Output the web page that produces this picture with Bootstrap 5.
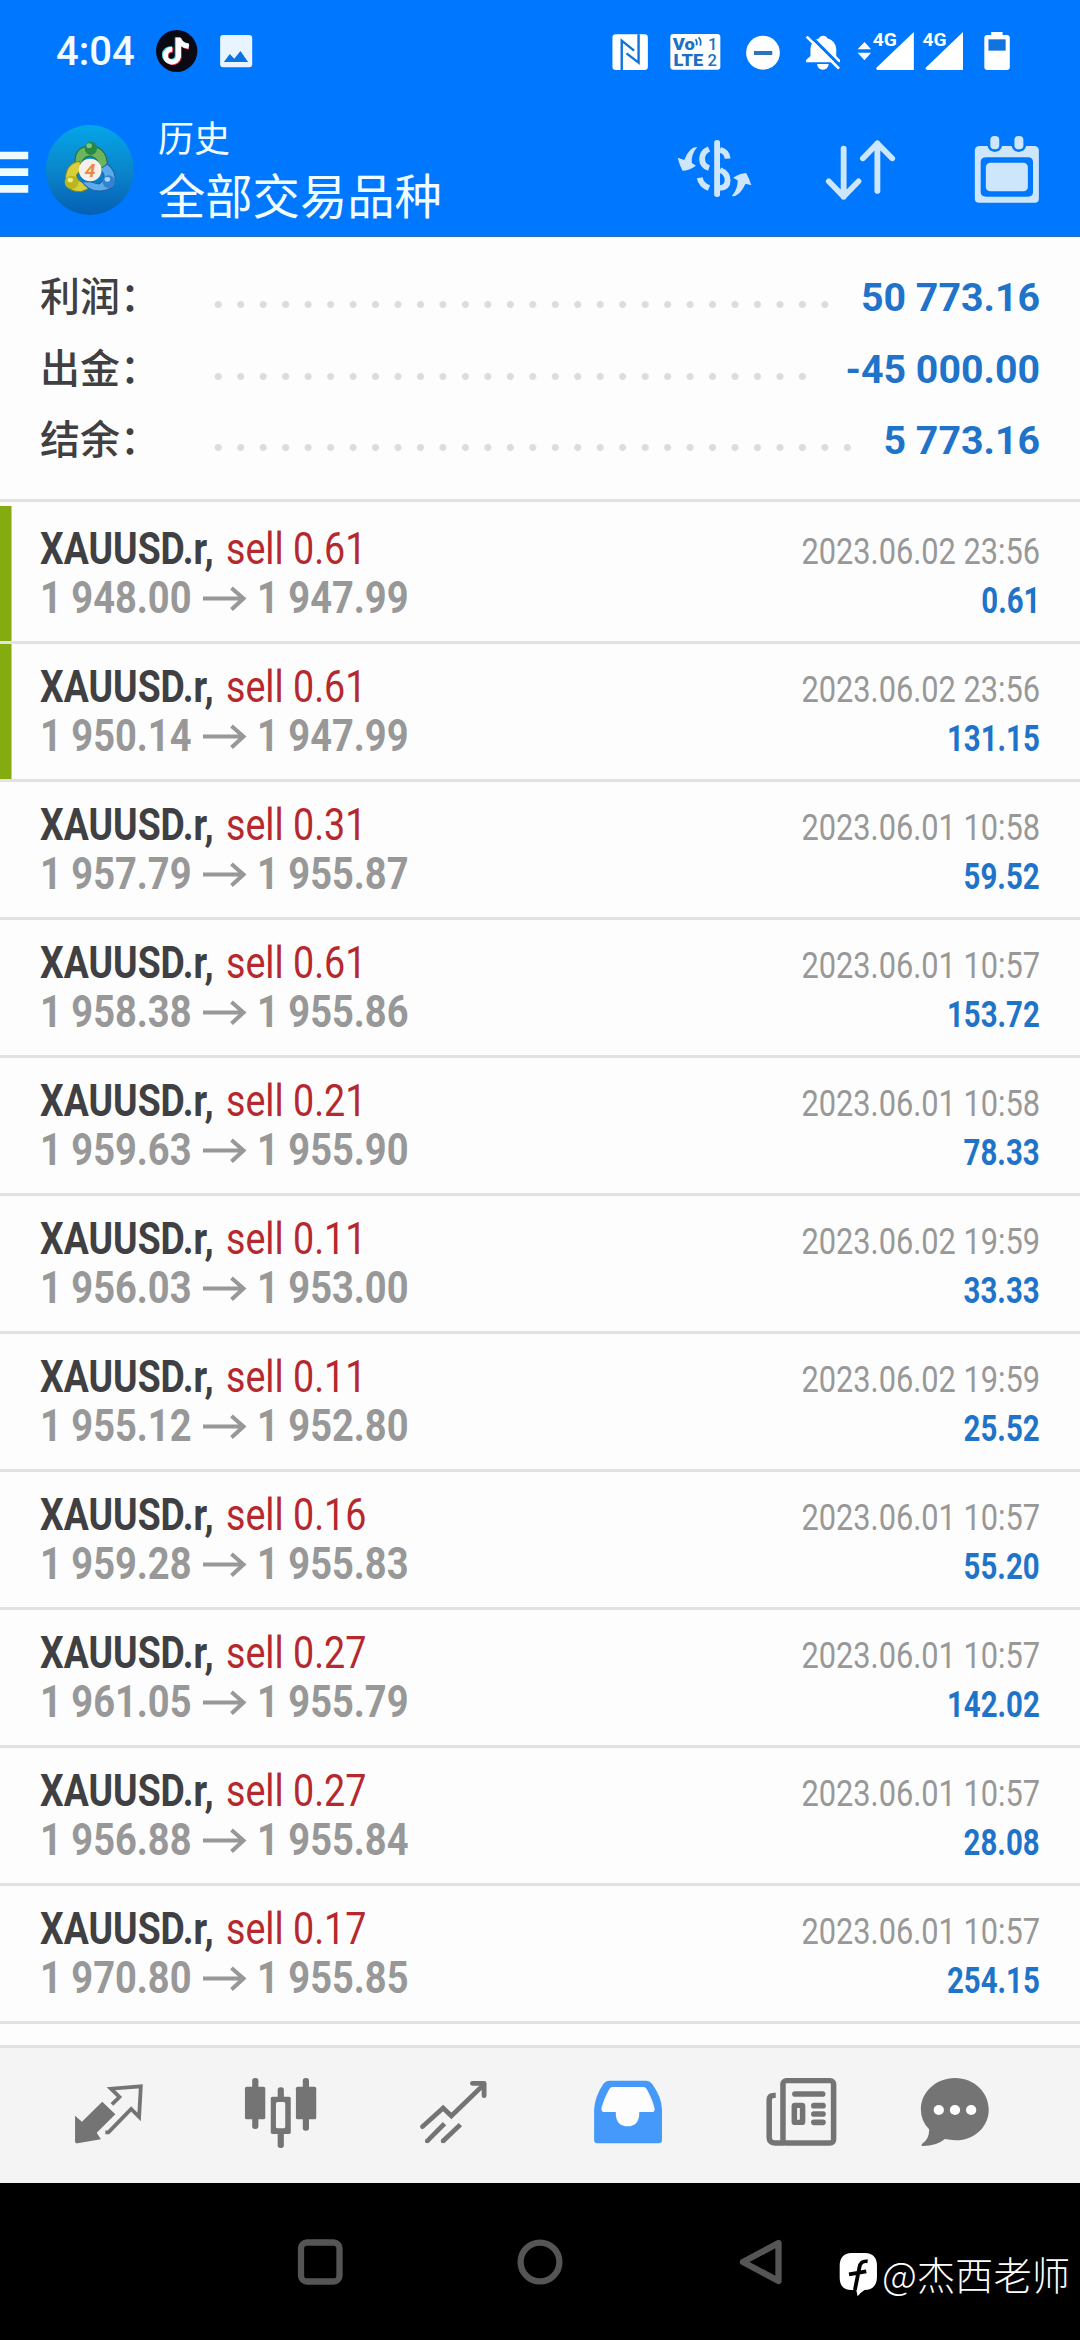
<!DOCTYPE html>
<html lang="zh-CN">
<head>
<meta charset="utf-8">
<meta name="viewport" content="width=device-width, initial-scale=1">
<title>历史</title>
<link rel="stylesheet" href="https://cdn.jsdelivr.net/npm/bootstrap@5.3.0/dist/css/bootstrap.min.css">
<style>
  body{width:1080px;height:2340px;overflow:hidden;background:#fdfdfd;font-family:Roboto,"Noto Sans CJK SC",sans-serif;color:#404042}
  svg{display:block;flex:none}
  .app-top{background:#0077ff;height:237px;border-bottom:1px solid #2a6fb5;color:#f2fdff}
  .status{height:102px;padding:30px 58px 0 56px}
  .clock{font-size:40px;font-weight:500;line-height:43px;width:100px}
  .titlebar{height:134px}
  .titles{padding-top:14px}
  .sub-t{font-size:36px;line-height:40px}
  .main-t{font-size:47.3px;line-height:76px}
  .cjk{font-family:"Noto Sans CJK SC",sans-serif}
  .summary{height:265px;padding:26px 40px 0;border-bottom:3px solid #e2e2e2}
  .sum-row{height:71.4px}
  .sum-label{width:167px;font-size:40px;font-weight:500;line-height:50px;padding-bottom:9px}
  .dots{height:71px;width:calc(var(--n)*22.48px);background:radial-gradient(circle at 50% 50%,#dcdcdc 3px,transparent 4px) 0 6px/22.48px 71px repeat-x}
  .sum-val{font-size:39.3px;font-weight:700;color:#1f73c8;line-height:71px}
  .deals{height:1543px;padding-top:4px}
  .deal{height:138px;padding:19px 40px 0;border-bottom:3px solid #e2e2e2;line-height:49px;white-space:nowrap}
  .deal.fresh{box-shadow:inset 11.5px 0 0 #84ab10}
  .nar{display:inline-block;transform-origin:0 50%}
  .sym{width:186px;font-size:44px;font-weight:700}
  .sym .nar{transform:scaleX(.848)}
  .side{font-size:44px;color:#b5282d}
  .side .nar{transform:scaleX(.855)}
  .price{font-size:44px;font-weight:700;color:#989898}
  .price .nar{transform:scaleX(.865)}
  .p-open{width:163px}
  .arr{width:54px;height:49px}
  .meta{padding-top:2px;text-align:right}
  .meta .nar{transform-origin:100% 50%}
  .when{font-size:37.5px;color:#989898}
  .when .nar{transform:scaleX(.82)}
  .gain{font-size:37px;font-weight:700;color:#1f73c8}
  .gain .nar{transform:scaleX(.795)}
  .tabs{height:138px;background:#f4f4f5;border-top:3px solid #e2e2e2;padding-left:22px;color:#747475}
  .sysnav{height:157px;background:#000;position:relative}
  .wm{position:absolute;right:10px;bottom:36px;color:#fff}
  .wm span{font-size:38.3px;line-height:56px;font-weight:300;padding-bottom:2px}
</style>
<script src="https://cdn.jsdelivr.net/npm/bootstrap@5.3.0/dist/js/bootstrap.bundle.min.js"></script>
</head>
<body>
<svg width="0" height="0" class="position-absolute"><defs>
  <symbol id="arrow" viewBox="0 0 54 49"><path d="M0 24.6H40M28.500 14L40.500 24.600 28.500 35.500" fill="none" stroke="#989898" stroke-width="4"/></symbol>
</defs></svg>

<header class="app-top">
  <div class="status d-flex align-items-start">
    <div class="clock">4:04</div>
    <svg width="100" height="43" viewBox="453 90 290 129" preserveAspectRatio="none">
      <ellipse cx="513" cy="153" rx="60" ry="63" fill="#0b0a14"/>
      <g fill="none" stroke-width="15"><path d="M520 116V172A19 19 0 1 1 503 150M520 118Q526 138 549 141" stroke="#e0365a"/><path d="M515 112V168A19 19 0 1 1 498 146M515 114Q521 134 546 137" stroke="#3bd6d8"/><path d="M518 113V170A19 19 0 1 1 500 148M518 115Q524 136 548 139" stroke="#fff"/></g>
      <rect x="639" y="105" width="93" height="97" rx="9" fill="#e8f4ff"/><path d="M650 186L667 162 680 176 698 153 720 186Z" fill="#0b74e0"/>
    </svg>
    <div class="ms-auto d-flex">
      <svg width="51.6" height="43.300" viewBox="200 90 150 130" preserveAspectRatio="none"><rect x="210" y="103" width="103" height="107" rx="10" fill="#fff"/><path d="M237 210V122L273 152M286 103V188L251 160" fill="none" stroke="#1273dc" stroke-width="7"/></svg>
      <svg width="72.4" height="43.300" viewBox="350 90 210 130" preserveAspectRatio="none"><rect x="380" y="102" width="145" height="107" rx="9" fill="#fff"/><g fill="#1c6fc4" font-family="Roboto" font-weight="900" font-size="50"><text x="387" y="149" textLength="64" lengthAdjust="spacingAndGlyphs">Vo</text><text x="389" y="198" textLength="86" lengthAdjust="spacingAndGlyphs">LTE</text><text x="489" y="150" font-weight="500" font-size="48">1</text><text x="488" y="198" font-weight="500" font-size="48">2</text></g><path d="M453 118Q459 125 456 136M462 112Q471 122 467 137" fill="none" stroke="#1c6fc4" stroke-width="5"/></svg>
      <svg width="62" height="43.300" viewBox="560 90 180 130" preserveAspectRatio="none"><ellipse cx="647" cy="158" rx="49" ry="51" fill="#fff"/><path d="M621 159H674" stroke="#2b74bd" stroke-width="12"/></svg>
      <svg width="55" height="43.300" viewBox="740 90 160 130" preserveAspectRatio="none"><g fill="#fff"><path d="M772 187V180L785 168V145Q788 122 810 115Q812 107 822 107T834 115Q857 122 860 146V168L871 180V187Z"/><path d="M804 192H838Q836 209 821 209T804 192Z"/></g><path d="M781 104L872 198" stroke="#0077ff" stroke-width="9"/><path d="M774 110L868 206" stroke="#fff" stroke-width="8"/></svg>
      <svg width="69" height="43.300" viewBox="900 90 200 130" preserveAspectRatio="none"><g fill="#fff"><path d="M942 126L961 148H922ZM922 158H961L942 181ZM1085 96V210H980Q973 208 978 202Z"/><text x="966" y="139" font-family="Roboto" font-weight="700" font-size="57" textLength="70" lengthAdjust="spacingAndGlyphs">4G</text></g></svg>
      <svg width="55" height="43.300" viewBox="1100 90 160 130" preserveAspectRatio="none"><g fill="#fff"><path d="M1228 96V210H1124Q1116 208 1121 202Z"/><text x="1110" y="139" font-family="Roboto" font-weight="700" font-size="57" textLength="70" lengthAdjust="spacingAndGlyphs">4G</text></g></svg>
      <svg width="48.2" height="43.300" viewBox="1260 90 140 130" preserveAspectRatio="none"><path d="M1310 96H1343V105H1355Q1364 105 1364 114V201Q1364 210 1355 210H1299Q1290 210 1290 201V114Q1290 105 1299 105H1310Z" fill="#fff"/><path d="M1302 118H1352V152H1302Z" fill="#1273dc"/></svg>
    </div>
  </div>
  <div class="titlebar d-flex align-items-start">
    <svg width="158" height="134" viewBox="0 306 459 402" preserveAspectRatio="none">
      <defs><linearGradient id="sea" x1="0" y1="0" x2="0" y2="1"><stop offset="0" stop-color="#05a5e8"/><stop offset=".5" stop-color="#0a86cc"/><stop offset="1" stop-color="#065fb4"/></linearGradient></defs>
      <path d="M0 455H82V478H0ZM0 505H82V528H0ZM0 555H82V578H0Z" fill="#eefcff"/>
      <ellipse cx="261" cy="510" rx="128" ry="135" fill="url(#sea)"/>
      <g stroke-width="3"><path d="M218 488Q216 440 262 438Q312 440 312 500L292 510Q286 472 262 468Q240 470 238 492Z" fill="#6db55c" stroke="#226c3a"/>
      <path d="M232 484Q188 490 190 545Q196 576 236 575L256 566 248 548Q222 545 222 525L236 508Z" fill="#d9cf3b" stroke="#7f8524"/>
      <path d="M292 506L312 492Q338 512 334 546Q326 574 288 573Q256 572 238 545L262 545 286 552Q305 544 302 524Z" fill="#5cabea" stroke="#1c62a8"/></g>
      <ellipse cx="264" cy="445" rx="18" ry="20" fill="#278845"/><ellipse cx="259" cy="437" rx="8" ry="7" fill="#7fc486"/>
      <ellipse cx="208" cy="547" rx="20" ry="20" fill="#b8b51d"/><ellipse cx="204" cy="540" rx="8" ry="7" fill="#f1ed86"/>
      <ellipse cx="316" cy="545" rx="18" ry="19" fill="#3382d2"/><ellipse cx="312" cy="538" rx="8" ry="7" fill="#a6d7fb"/>
      <ellipse cx="262" cy="510" rx="33" ry="34" fill="#f6f1e8"/><text x="262" y="530" text-anchor="middle" font-family="Roboto" font-weight="700" font-style="italic" font-size="56" fill="#ea8a42">4</text>
    </svg>
    <div class="cjk titles"><div class="sub-t">历史</div><div class="main-t">全部交易品种</div></div>
    <svg class="ms-auto" width="413.2" height="134" viewBox="368 306 1200 402" preserveAspectRatio="none">
      <g fill="#cde6fc"><rect x="505" y="420" width="17" height="171" rx="8"/>
      <path d="M456 441Q433 440 418 480L399 473Q404 494 413 512Q432 512 452 497L440 489Q438 462 456 441ZM556 589Q579 590 596 551L613 556Q608 538 598 519Q580 520 560 533L573 541Q575 565 556 589Z"/></g>
      <g fill="none" stroke="#cde6fc" stroke-width="17"><path d="M490 447Q470 456 470 477T490 504M463 533Q467 555 490 564M522 449Q543 455 544 476M522 510Q544 519 544 541T522 564"/></g>
      <g fill="none" stroke="#cde6fc" stroke-width="17" stroke-linecap="round" stroke-linejoin="round"><path d="M881 446V590M838 544L881 590 924 544M979 573V430M937 475L979 430 1022 475"/></g>
      <path fill-rule="evenodd" fill="#cde6fc" d="M1274 438H1299Q1302 454 1320 456Q1338 454 1341 438H1369Q1372 454 1390 456Q1408 454 1411 438H1436Q1448 440 1448 451V596Q1448 608 1436 608H1274Q1262 608 1262 596V451Q1262 440 1274 438ZM1295 472Q1279 472 1279 486V576Q1279 590 1295 590H1416Q1431 590 1431 576V486Q1431 472 1416 472Z"/>
      <rect x="1294" y="488" width="122" height="86" rx="13" fill="#cde6fc"/><rect x="1307" y="408" width="26" height="40" rx="12" fill="#cde6fc"/><rect x="1377" y="408" width="26" height="40" rx="12" fill="#cde6fc"/>
    </svg>
  </div>
</header>

<section class="summary">
  <div class="sum-row d-flex align-items-center"><div class="sum-label cjk">利润：</div><div class="dots" style="--n:28"></div><div class="sum-val ms-auto">50 773.16</div></div>
  <div class="sum-row d-flex align-items-center"><div class="sum-label cjk">出金：</div><div class="dots" style="--n:27"></div><div class="sum-val ms-auto">-45 000.00</div></div>
  <div class="sum-row d-flex align-items-center"><div class="sum-label cjk">结余：</div><div class="dots" style="--n:29"></div><div class="sum-val ms-auto">5 773.16</div></div>
</section>

<main class="deals" id="deals"></main>

<nav class="tabs d-flex">
  <svg width="173.2" height="135" viewBox="63.9 204 503 405" preserveAspectRatio="none"><path d="M218 407L238 425 297 365 335 403 281 458 293 478 225 490Q218 491 218 484Z" fill="currentColor"/><path d="M325 373L347 351 322 326 409 319 404 411 381 387 315 457H306" fill="none" stroke="currentColor" stroke-width="11"/></svg>
  <svg width="173.2" height="135" viewBox="566.9 204 503 405" preserveAspectRatio="none"><g fill="currentColor"><rect x="712" y="320" width="59" height="98" rx="5"/><rect x="733" y="294" width="18" height="153" rx="8"/><rect x="860" y="320" width="59" height="98" rx="5"/><rect x="880" y="294" width="18" height="158" rx="8"/><rect x="787" y="350" width="58" height="112" rx="5"/><rect x="807" y="322" width="18" height="182" rx="8"/></g><rect x="802" y="366" width="27" height="79" rx="5" fill="#f4f4f5"/></svg>
  <svg width="173.2" height="135" viewBox="1069.8 204 503 405" preserveAspectRatio="none"><g fill="none" stroke="currentColor" stroke-width="14" stroke-linecap="round"><path d="M1228 440L1288 384 1312 408 1406 314"/><path d="M1373 310H1407V347" stroke-linejoin="round"/></g><path d="M1242 483L1292 431M1288 483L1338 434" stroke="currentColor" stroke-width="14"/><g fill="currentColor"><circle cx="1242" cy="483" r="7"/><circle cx="1288" cy="483" r="7"/></g></svg>
  <svg width="173.2" height="135" viewBox="4.6 204 503 405" preserveAspectRatio="none"><path d="M183 385L200 318H305L328 385V398H287Q284 440 253 440T219 398H180Z" fill="#fdfdfe"/><path fill-rule="evenodd" fill="#4499fb" d="M200 302H308Q317 302 324 311Q352 350 353 388V480Q353 490 343 490H166Q156 490 156 480V388Q158 350 183 311Q190 302 200 302ZM208 321Q203 321 199 329Q183 359 177 385Q177 396 184 396H219V405Q222 439 253 439T287 405V396H325Q332 396 332 386Q326 359 310 329Q306 321 300 321Z"/></svg>
  <svg width="173.2" height="135" viewBox="507.6 204 503 405" preserveAspectRatio="none"><g fill="none" stroke="currentColor" stroke-width="16"><rect x="705" y="302" width="147" height="187" rx="10"/><path d="M684 346H679Q665 346 665 360V472Q665 489 681 489H710"/><rect x="738" y="376" width="24" height="51" rx="2"/></g><path d="M740 342H820M795 377H821M795 402H821M795 427H821" stroke="currentColor" stroke-width="17" stroke-linecap="round"/></svg>
  <svg width="134" height="135" viewBox="1010.6 204 389 405" preserveAspectRatio="none"><path d="M1205 294C1262 294 1303 338 1303 389C1303 442 1258 483 1205 481Q1192 480 1176 477Q1150 499 1109 498Q1107 495 1109 492Q1131 477 1130 448Q1106 424 1106 388C1106 336 1150 294 1205 294Z" fill="currentColor"/><g fill="#fff"><circle cx="1158" cy="390" r="15"/><circle cx="1205" cy="390" r="15"/><circle cx="1252" cy="390" r="15"/></g></svg>
</nav>

<footer class="sysnav">
  <svg width="800" height="157" viewBox="0 0 800 157" fill="none" stroke="#555" stroke-width="6.300" stroke-linejoin="round"><rect x="301" y="59.500" width="38.500" height="39" rx="6"/><circle cx="540" cy="79" r="19.400"/><path d="M778.500 60V98L743 79Z"/></svg>
  <div class="wm cjk d-flex align-items-center">
    <svg width="39" height="44" viewBox="864 840 113 132" preserveAspectRatio="none"><path d="M900 840H940Q974 842 974 878V915Q972 950 938 951Q927 958 918 970L914 951H900Q866 950 866 915V878Q866 842 900 840Z" fill="#fff"/><path d="M947 865Q926 862 923 884L910 951M893 904L943 895" fill="none" stroke="#000" stroke-width="11"/></svg>
    <span class="ms-1">@杰西老师</span>
  </div>
</footer>

<script>
  const deals = [
    ["0.61","1 948.00","1 947.99","2023.06.02 23:56","0.61",1],
    ["0.61","1 950.14","1 947.99","2023.06.02 23:56","131.15",1],
    ["0.31","1 957.79","1 955.87","2023.06.01 10:58","59.52"],
    ["0.61","1 958.38","1 955.86","2023.06.01 10:57","153.72"],
    ["0.21","1 959.63","1 955.90","2023.06.01 10:58","78.33"],
    ["0.11","1 956.03","1 953.00","2023.06.02 19:59","33.33"],
    ["0.11","1 955.12","1 952.80","2023.06.02 19:59","25.52"],
    ["0.16","1 959.28","1 955.83","2023.06.01 10:57","55.20"],
    ["0.27","1 961.05","1 955.79","2023.06.01 10:57","142.02"],
    ["0.27","1 956.88","1 955.84","2023.06.01 10:57","28.08"],
    ["0.17","1 970.80","1 955.85","2023.06.01 10:57","254.15"]
  ];
  document.getElementById("deals").innerHTML = deals.map(([lot, open, close, when, gain, fresh]) => `
    <div class="deal d-flex justify-content-between ${fresh ? "fresh" : ""}">
      <div>
        <div class="d-flex"><div class="sym"><span class="nar">XAUUSD.r,</span></div><div class="side"><span class="nar">sell ${lot}</span></div></div>
        <div class="price d-flex"><div class="p-open"><span class="nar">${open}</span></div><svg class="arr"><use href="#arrow"/></svg><div><span class="nar">${close}</span></div></div>
      </div>
      <div class="meta">
        <div class="when"><span class="nar">${when}</span></div>
        <div class="gain"><span class="nar">${gain}</span></div>
      </div>
    </div>`).join("");
</script>
</body>
</html>
